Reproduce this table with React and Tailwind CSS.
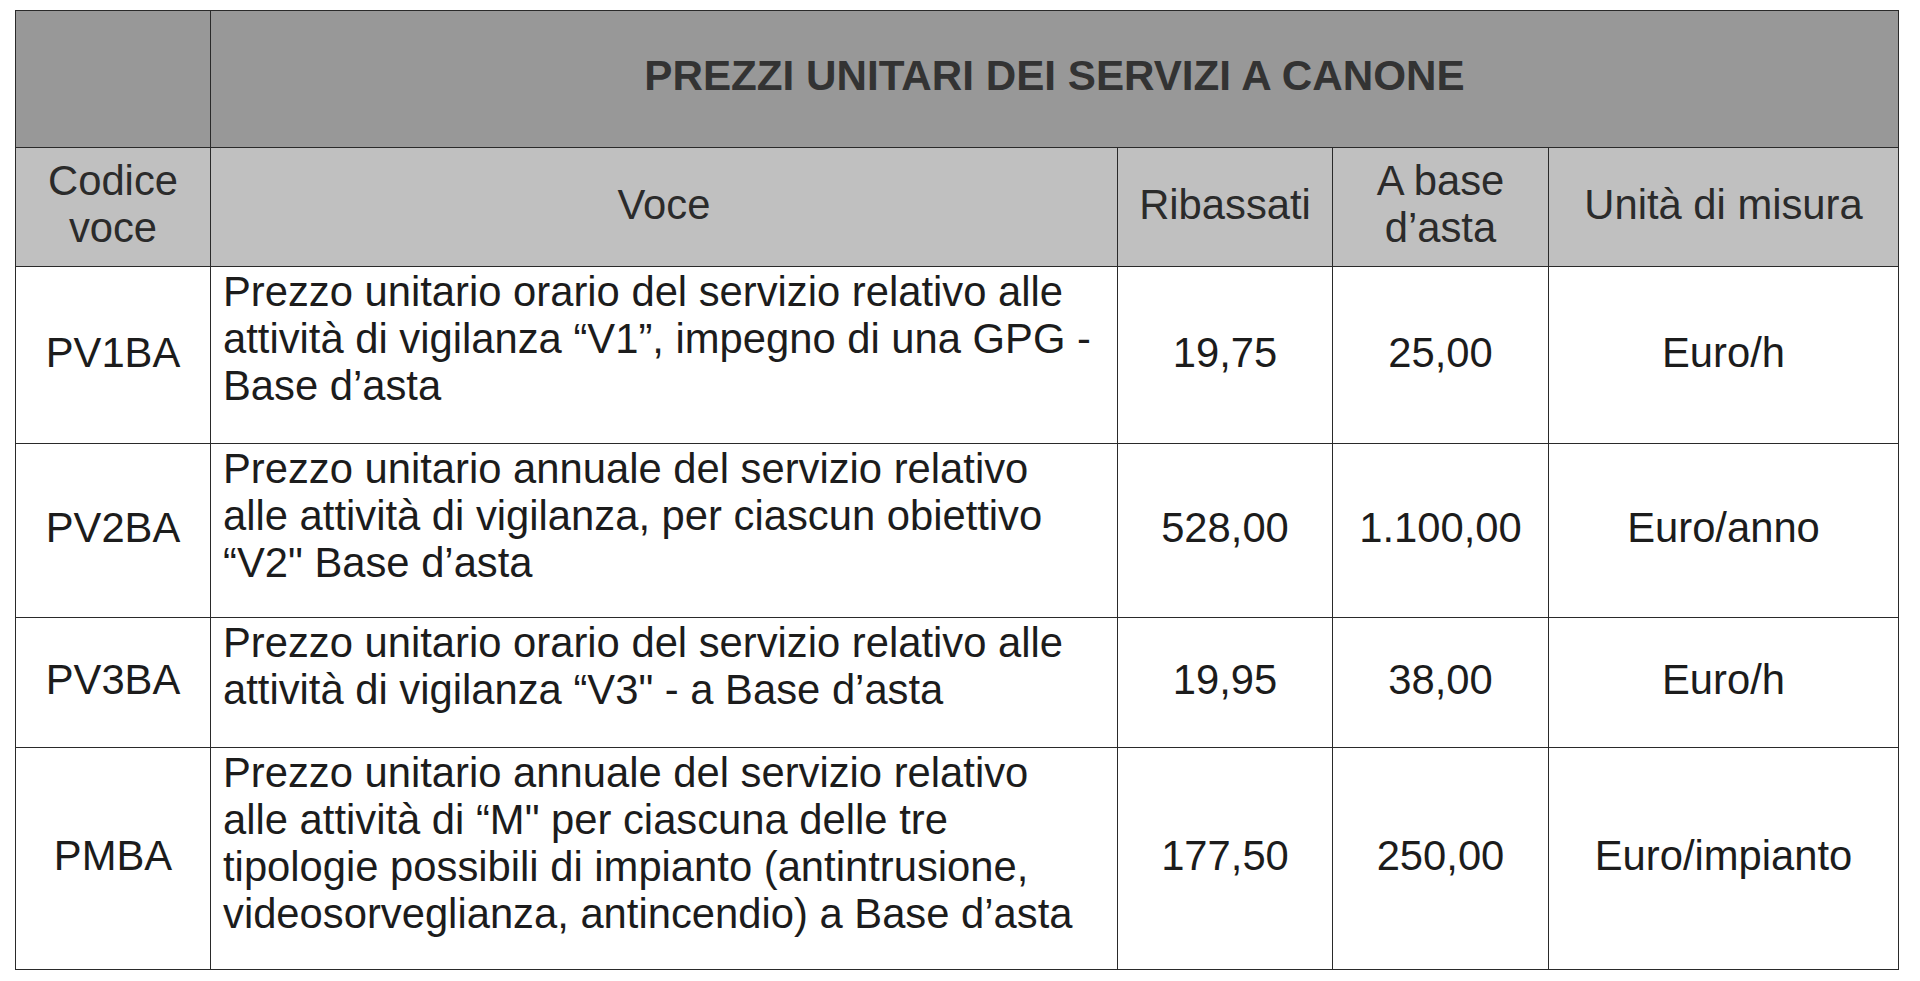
import React from 'react';

const rows = [
    {
        code: 'PV1BA',
        lines: [
            'Prezzo unitario orario del servizio relativo alle',
            'attività di vigilanza “V1”, impegno di una GPG -',
            'Base d’asta',
        ],
        ribassati: '19,75',
        base: '25,00',
        unit: 'Euro/h',
        height: 'h-[177px]',
    },
    {
        code: 'PV2BA',
        lines: [
            'Prezzo unitario annuale del servizio relativo',
            'alle attività di vigilanza, per ciascun obiettivo',
            '“V2" Base d’asta',
        ],
        ribassati: '528,00',
        base: '1.100,00',
        unit: 'Euro/anno',
        height: 'h-[174px]',
    },
    {
        code: 'PV3BA',
        lines: [
            'Prezzo unitario orario del servizio relativo alle',
            'attività di vigilanza “V3" - a Base d’asta',
        ],
        ribassati: '19,95',
        base: '38,00',
        unit: 'Euro/h',
        height: 'h-[130px]',
    },
    {
        code: 'PMBA',
        lines: [
            'Prezzo unitario annuale del servizio relativo',
            'alle attività di “M" per ciascuna delle tre',
            'tipologie possibili di impianto (antintrusione,',
            'videosorveglianza, antincendio) a Base d’asta',
        ],
        ribassati: '177,50',
        base: '250,00',
        unit: 'Euro/impianto',
        height: 'h-[222px]',
    },
];

const cell = 'border border-[#2a2a2a] px-0 pt-0 pb-[6px] text-center align-middle';

const App = () => {
    return (
        <div className="bg-white pt-[10px] pl-[15px] font-['Liberation_Sans',Arial,sans-serif] text-[41.75px] leading-[47px] text-[#1c1c1c]">
            <table className="w-[1883px] table-fixed border-collapse border border-[#2a2a2a]">
                <colgroup>
                    <col className="w-[195px]" />
                    <col className="w-[907px]" />
                    <col className="w-[215px]" />
                    <col className="w-[216px]" />
                    <col className="w-[350px]" />
                </colgroup>
                <thead>
                    {/* Title row */}
                    <tr className="h-[137px] bg-[#989898]">
                        <th className={cell}></th>
                        <th colSpan={4} className={`${cell} pb-[8px] text-[42.2px] font-bold text-[#333333]`}>
                            PREZZI UNITARI DEI SERVIZI A CANONE
                        </th>
                    </tr>
                    {/* Column headings */}
                    <tr className="h-[119px] bg-[#c0c0c0] text-[#2b2b2b]">
                        <th className={`${cell} font-normal`}>
                            Codice<br />voce
                        </th>
                        <th className={`${cell} font-normal`}>Voce</th>
                        <th className={`${cell} font-normal`}>Ribassati</th>
                        <th className={`${cell} font-normal`}>
                            A base<br />d’asta
                        </th>
                        <th className={`${cell} font-normal`}>Unità di misura</th>
                    </tr>
                </thead>
                <tbody>
                    {rows.map((row) => (
                        <tr key={row.code} className={row.height}>
                            <td className={cell}>{row.code}</td>
                            <td className="border border-[#2a2a2a] px-3 pt-[1px] pb-0 text-left align-top whitespace-nowrap">
                                {row.lines.map((line, i) => (
                                    <div key={i}>{line}</div>
                                ))}
                            </td>
                            <td className={cell}>{row.ribassati}</td>
                            <td className={cell}>{row.base}</td>
                            <td className={cell}>{row.unit}</td>
                        </tr>
                    ))}
                </tbody>
            </table>
        </div>
    );
};

export default App;
